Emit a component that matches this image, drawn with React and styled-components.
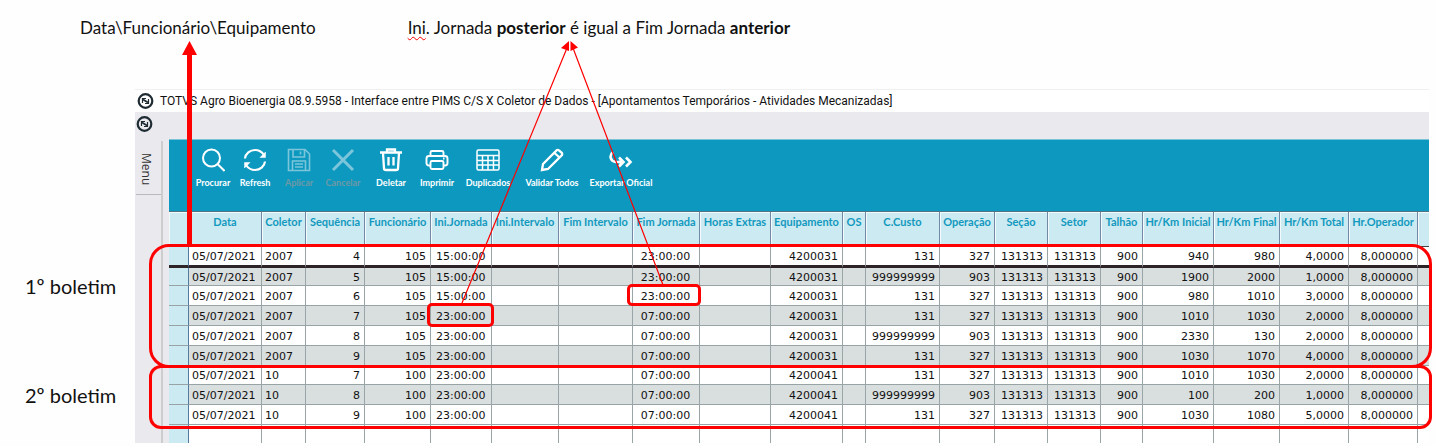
import React from "react";
import styled, { createGlobalStyle, css } from "styled-components";

const GlobalStyle = createGlobalStyle`
  * {
    box-sizing: border-box;
  }

  body {
    margin: 0;
    background: #fefefe;
    color: #111;
    font-family: "Open Sans", sans-serif;
    overflow: hidden;
  }
`;

const Page = styled.main`
  position: relative;
  display: grid;
  grid-template-columns: 135px 1fr;
  grid-template-rows: 89px auto;
  padding-right: 7px;
`;

const Notes = styled.header`
  grid-column: 1 / -1;
  display: flex;
  gap: 92px;
  padding: 16px 0 0 80px;
  font-family: Lato, sans-serif;
  font-size: 17px;
  line-height: 24px;
  white-space: nowrap;

  p {
    margin: 0;
  }
`;

const Misspelled = styled.span`
  text-decoration: underline wavy #f00 1px;
  text-underline-offset: 2px;
`;

const Groups = styled.aside`
  display: flex;
  flex-direction: column;
  gap: 85px;
  padding: 185px 0 0 25px;
  font-family: Lato, sans-serif;
  font-size: 20px;
  line-height: 24px;
`;

const Window = styled.section`
  min-width: 0;
  background: #eaeaee;
`;

const TitleBar = styled.div`
  display: flex;
  align-items: center;
  gap: 6px;
  height: 23px;
  padding-left: 2px;
  border-top: 1px solid #f0f0f0;
  background: #fff;
  white-space: nowrap;

  h1 {
    margin: 0;
    font-family: Roboto, sans-serif;
    font-size: 12px;
    font-weight: 400;
  }
`;

const MenuBar = styled.div`
  display: flex;
  height: 27px;
  padding: 4px 0 0 1px;
`;

const Body = styled.div`
  display: grid;
  grid-template-columns: 34px 1fr;
`;

const Side = styled.div`
  padding: 2px 6px 0 1px;
`;

const SideInner = styled.div`
  height: 100%;
  border-right: 2px solid #cdcdcf;
`;

const MenuTab = styled.button`
  width: 100%;
  height: 54px;
  padding: 8px 5px 0 0;
  border: 0;
  border-bottom: 1px solid #b9b9bd;
  background: none;
  color: #333;
  font-family: "Open Sans", sans-serif;
  font-size: 12px;
  line-height: 16px;

  span {
    writing-mode: vertical-rl;
  }
`;

const Toolbar = styled.div`
  display: flex;
  height: 73px;
  padding: 8px 0 0 23px;
  border-top: 1px solid #7cc3d8;
  border-bottom: 1px solid #4f7585;
  background: #0d99bf;
`;

const Tool = styled.button`
  display: flex;
  flex-direction: column;
  align-items: center;
  width: ${(props) => props.$width}px;
  height: 44px;
  padding: 0;
  border: 0;
  background: none;
  color: ${(props) => (props.disabled ? "#6f98a6" : "#fff")};
  font-family: Lato, sans-serif;
  font-size: 9px;
  font-weight: 700;
  line-height: 12px;
  white-space: nowrap;

  svg {
    flex: none;
    margin-bottom: 5px;
    color: ${(props) => (props.disabled ? "#7cc5db" : "#fff")};
  }
`;

const GridWrap = styled.div`
  position: relative;
`;

const Table = styled.table`
  width: 100%;
  table-layout: fixed;
  border-collapse: separate;
  border-spacing: 0;
  background: #fff;
  font-family: "DejaVu Sans", sans-serif;
  font-size: 11px;
  line-height: 14px;
`;

const HeadCell = styled.th`
  height: 35px;
  padding: 3px 0 0;
  border-right: 1px solid #7388a5;
  border-bottom: 1px solid #444;
  box-shadow: inset 1px 1px 0 #f2fafc;
  background: #cceaf2;
  color: #1299be;
  font-family: Lato, sans-serif;
  font-size: 11px;
  font-weight: 700;
  text-align: center;
  vertical-align: top;
  white-space: nowrap;

  &:last-child {
    border-right: 0;
  }
`;

const Row = styled.tr`
  height: ${(props) => props.$height}px;
  background: ${(props) => (props.$shaded ? "#d9dede" : "#fff")};

  td,
  th {
    border-bottom: 1px solid #97a3a5;
    ${(props) =>
      props.$current &&
      css`
        border-bottom: 3px solid #2d2428;
      `}
    ${(props) =>
      props.$blank &&
      css`
        border-bottom: 0;
      `}
  }
`;

const RowHead = styled.th`
  padding: 0;
  border-right: 1px solid #55799f;
  background: #cceaf2;
`;

const Cell = styled.td`
  padding: 2px 4px 0 ${(props) => props.$indent || 3}px;
  border-right: 1px solid #9aa5a7;
  text-align: ${(props) => props.$align || "right"};
  white-space: nowrap;
  overflow: hidden;

  &:last-child {
    border-right: 0;
  }
`;

const Marker = styled.div`
  position: absolute;
  top: ${(props) => props.$top}px;
  left: ${(props) => props.$left}px;
  ${(props) => (props.$width ? `width: ${props.$width}px;` : "right: -3px;")}
  height: ${(props) => props.$height}px;
  border: 3px solid #fe0000;
  border-radius: ${(props) => props.$radius}px;
  pointer-events: none;
`;

const Arrows = styled.svg`
  position: absolute;
  top: 0;
  left: 0;
  pointer-events: none;
`;

const columns = [
  { label: "Data", width: 73, align: "left" },
  { label: "Coletor", width: 44, align: "left" },
  { label: "Sequência", width: 59 },
  { label: "Funcionário", width: 66 },
  { label: "Ini.Jornada", width: 61, align: "left", indent: 5 },
  { label: "Ini.Intervalo", width: 67 },
  { label: "Fim Intervalo", width: 74 },
  { label: "Fim Jornada", width: 67, align: "center" },
  { label: "Horas Extras", width: 71 },
  { label: "Equipamento", width: 72 },
  { label: "OS", width: 23 },
  { label: "C.Custo", width: 74 },
  { label: "Operação", width: 55 },
  { label: "Seção", width: 53 },
  { label: "Setor", width: 53 },
  { label: "Talhão", width: 42 },
  { label: "Hr/Km Inicial", width: 71 },
  { label: "Hr/Km Final", width: 66 },
  { label: "Hr/Km Total", width: 69 },
  { label: "Hr.Operador", width: 69 },
];

const toRow = (coletor, seq, func, ini, fim, equip, custo, oper, kmIni, kmFim, total) => [
  "05/07/2021", coletor, seq, func, ini, "", "", fim, "", equip, "",
  custo, oper, "131313", "131313", "900", kmIni, kmFim, total, "8,000000",
];

const rows = [
  toRow("2007", "4", "105", "15:00:00", "23:00:00", "4200031", "131", "327", "940", "980", "4,0000"),
  toRow("2007", "5", "105", "15:00:00", "23:00:00", "4200031", "999999999", "903", "1900", "2000", "1,0000"),
  toRow("2007", "6", "105", "15:00:00", "23:00:00", "4200031", "131", "327", "980", "1010", "3,0000"),
  toRow("2007", "7", "105", "23:00:00", "07:00:00", "4200031", "131", "327", "1010", "1030", "2,0000"),
  toRow("2007", "8", "105", "23:00:00", "07:00:00", "4200031", "999999999", "903", "2330", "130", "2,0000"),
  toRow("2007", "9", "105", "23:00:00", "07:00:00", "4200031", "131", "327", "1030", "1070", "4,0000"),
  toRow("10", "7", "100", "23:00:00", "07:00:00", "4200041", "131", "327", "1010", "1030", "2,0000"),
  toRow("10", "8", "100", "23:00:00", "07:00:00", "4200041", "999999999", "903", "100", "200", "1,0000"),
  toRow("10", "9", "100", "23:00:00", "07:00:00", "4200041", "131", "327", "1030", "1080", "5,0000"),
];

const rowHeights = [21, 18, 20, 20, 20, 20, 19, 20, 20];

const AppIcon = () => (
  <svg width="17" height="16" viewBox="0 0 17 16" fill="none" stroke="#1f2b33">
    <circle cx="8.500" cy="8" r="6.800" strokeWidth="2.200" />
    <path d="M5.500 10V5.500H9M11.500 6V10.500H8" strokeWidth="1.200" />
    <path d="M6 6.500L11 9.500" strokeWidth="1.800" />
  </svg>
);

const icons = {
  search: (
    <g strokeWidth="2">
      <circle cx="10.5" cy="10" r="8.5" />
      <path d="M16.500 16l7 7" />
    </g>
  ),
  refresh: (
    <g strokeWidth="2.200">
      <path d="M2 10.500C2.500 5.500 7 2 12 2C16 2 19 4 21 7M22 13.500C21.500 18.500 17 22 12 22C8 22 5 20 3 17" />
      <path d="M22.500 4V9.500H17zM1.500 20V14.500H7z" fill="currentColor" strokeWidth="0.500" />
    </g>
  ),
  save: (
    <g strokeWidth="1.6">
      <path d="M1.500 1.500H18L22.500 6V22.500H1.500z" />
      <path d="M6 1.500V9H17.500V1.500M13.500 3.500V6.500M5.500 22V13H18.500V22M8 16H16M8 19H16" />
    </g>
  ),
  cancel: <path d="M2 2L22 22M22 2L2 22" strokeWidth="3" />,
  trash: (
    <g strokeWidth="2.300">
      <path d="M1 4.500H23M8 4V1.500H16V4M4 5L5 20.500Q5 22 7 22H17Q19 22 19 20.500L20 5" />
      <path d="M9.500 9V17.500M14.500 9V17.500" />
    </g>
  ),
  print: (
    <g strokeWidth="1.900">
      <path d="M5.500 8V4.500Q5.500 3 7 3H17Q18.500 3 18.500 4.500V8" />
      <path d="M5.500 17.500H4Q1.500 17.500 1.500 15V10.500Q1.500 8 4 8H20Q22.500 8 22.500 10.500V15Q22.500 17.500 20 17.500H18.500" />
      <rect x="5.500" y="13" width="13" height="8" rx="1.500" />
      <path d="M18 10.500h1.500" />
    </g>
  ),
  grid: (
    <g strokeWidth="1.500">
      <rect x="1" y="2" width="22" height="20" rx="1.500" />
      <path d="M1 7.500H23M1 12.500H23M1 17H23M6.500 7.500V22M12 7.500V22M17.500 7.500V22" />
    </g>
  ),
  edit: (
    <g strokeWidth="2.300">
      <path d="M2 22L3 16L17 2Q18 1.500 19 2.500L22 5Q22.500 6 22 7L8 21z" />
      <path d="M14.500 5L19.500 9.500" />
    </g>
  ),
  exportar: (
    <g strokeWidth="2.600">
      <path d="M4 4C0 7 1 13 6.500 14H14M10 9.500L14.500 14L10 18.500M17 9.500L21.500 14L17 18.500" />
      <path d="M11 11L15 14L11 17z" fill="currentColor" strokeWidth="1" />
    </g>
  ),
};

const tools = [
  { label: "Procurar", icon: "search", width: 42 },
  { label: "Refresh", icon: "refresh", width: 42 },
  { label: "Aplicar", icon: "save", width: 46, disabled: true },
  { label: "Cancelar", icon: "cancel", width: 42, disabled: true },
  { label: "Deletar", icon: "trash", width: 54 },
  { label: "Imprimir", icon: "print", width: 38 },
  { label: "Duplicados", icon: "grid", width: 64 },
  { label: "Validar Todos", icon: "edit", width: 64 },
  { label: "Exportar Oficial", icon: "exportar", width: 74 },
];

const DataGrid = () => (
  <Table>
    <colgroup>
      <col style={{ width: 20 }} />
      {columns.map((col) => (
        <col key={col.label} style={{ width: col.width }} />
      ))}
      <col />
    </colgroup>
    <thead>
      <tr>
        <HeadCell />
        {columns.map((col) => (
          <HeadCell key={col.label} scope="col">{col.label}</HeadCell>
        ))}
        <HeadCell />
      </tr>
    </thead>
    <tbody>
      {rows.map((row, i) => (
        <Row key={i} $height={rowHeights[i]} $shaded={i % 2 === 1} $current={i === 0}>
          <RowHead />
          {row.map((value, j) => (
            <Cell key={j} $align={columns[j].align} $indent={columns[j].indent}>{value}</Cell>
          ))}
          <Cell />
        </Row>
      ))}
      <Row $height={18} $blank>
        <RowHead />
        {columns.map((col) => (
          <Cell key={col.label} />
        ))}
        <Cell />
      </Row>
    </tbody>
  </Table>
);

export default function App() {
  return (
    <>
      <GlobalStyle />
      <Page>
        <Notes>
          <p>Data\Funcionário\Equipamento</p>
          <p>
            <Misspelled>Ini</Misspelled>. Jornada <b>posterior</b> é igual a Fim Jornada <b>anterior</b>
          </p>
        </Notes>

        <Groups>
          <span>1º boletim</span>
          <span>2º boletim</span>
        </Groups>

        <Window>
          <TitleBar>
            <AppIcon />
            <h1>
              TOTVS Agro Bioenergia 08.9.5958 - Interface entre PIMS C/S X Coletor de Dados - [Apontamentos
              Temporários - Atividades Mecanizadas]
            </h1>
          </TitleBar>
          <MenuBar>
            <AppIcon />
          </MenuBar>
          <Body>
            <Side>
              <SideInner>
                <MenuTab type="button"><span>Menu</span></MenuTab>
              </SideInner>
            </Side>
            <div>
              <Toolbar>
                {tools.map((tool) => (
                  <Tool key={tool.label} type="button" $width={tool.width} disabled={tool.disabled}>
                    <svg width="24" height="24" viewBox="0 0 24 24" fill="none" stroke="currentColor">
                      {icons[tool.icon]}
                    </svg>
                    {tool.label}
                  </Tool>
                ))}
              </Toolbar>
              <GridWrap>
                <DataGrid />
                <Marker $top={32} $left={-20} $height={124} $radius={20} />
                <Marker $top={153} $left={-20} $height={64} $radius={12} />
                <Marker $top={91} $left={258} $width={67} $height={24} $radius={5} />
                <Marker $top={72} $left={458} $width={74} $height={22} $radius={5} />
              </GridWrap>
            </div>
          </Body>
        </Window>

        <Arrows width="720" height="320" fill="#fe0000" stroke="#fe0000">
          <path d="M189.500 54V246" strokeWidth="5" />
          <path d="M189.500 41L197 55H182z" stroke="none" />
          <path d="M567 48L462 303M573 48L663 285" strokeWidth="1.200" />
          <path d="M569 41V51L561 48zM570.500 41V51L578 47.500z" stroke="none" />
        </Arrows>
      </Page>
    </>
  );
}
